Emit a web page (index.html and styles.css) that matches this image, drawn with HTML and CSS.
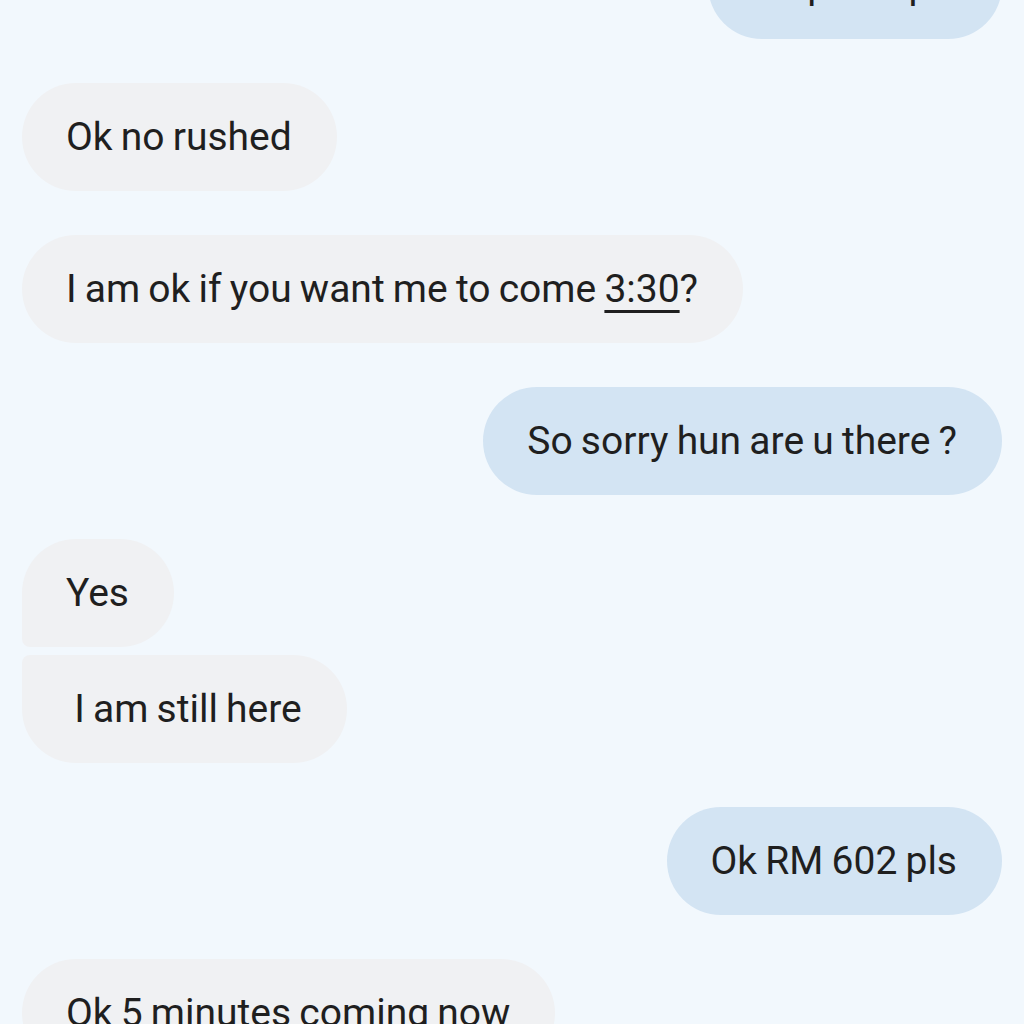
FILE: index.html
```html
<!DOCTYPE html>
<html>
<head>
    <title>Messages</title>
    <link rel="stylesheet" href="styles.css">
</head>
<body>
    <div class="thread">
        <div class="group out">
            <div class="bubble">Ok pick up ?</div>
        </div>

        <div class="group in">
            <div class="bubble">Ok no rushed</div>
        </div>

        <div class="group in">
            <div class="bubble">I am ok if you want me to come <span class="time">3:30</span>?</div>
        </div>

        <div class="group out">
            <div class="bubble">So sorry hun are u there ?</div>
        </div>

        <div class="group in">
            <div class="bubble first">Yes</div>
            <div class="bubble last">&nbsp;I am still here</div>
        </div>

        <div class="group out">
            <div class="bubble">Ok RM 602 pls</div>
        </div>

        <div class="group in">
            <div class="bubble">Ok 5 minutes coming now</div>
        </div>
    </div>
</body>
</html>
```

FILE: styles.css
```css
html, body {
    margin: 0;
    padding: 0;
    background: #f2f8fd;
}
body {
    font-family: Roboto, "Noto Sans", sans-serif;
    color: #1f1f1f;
    overflow: hidden;
    height: 1024px;
}
.thread {
    display: flex;
    flex-direction: column;
    gap: 44px;
    padding: 0 22px;
    margin-top: -69px;
}
.group {
    display: flex;
    flex-direction: column;
    gap: 8px;
}
.group.in {
    align-items: flex-start;
}
.group.out {
    align-items: flex-end;
}
.bubble {
    font-size: 39px;
    line-height: 48px;
    word-spacing: -1.5px;
    padding: 30px 45px 30px 44px;
    border-radius: 54px;
    white-space: nowrap;
}
.in .bubble {
    background: #f0f1f3;
}
.out .bubble {
    background: #d3e4f3;
}
.in .bubble.first {
    border-bottom-left-radius: 8px;
}
.in .bubble.last {
    border-top-left-radius: 8px;
}
.time {
    text-decoration: underline;
    text-decoration-thickness: 3px;
    text-underline-offset: 8px;
}
```
